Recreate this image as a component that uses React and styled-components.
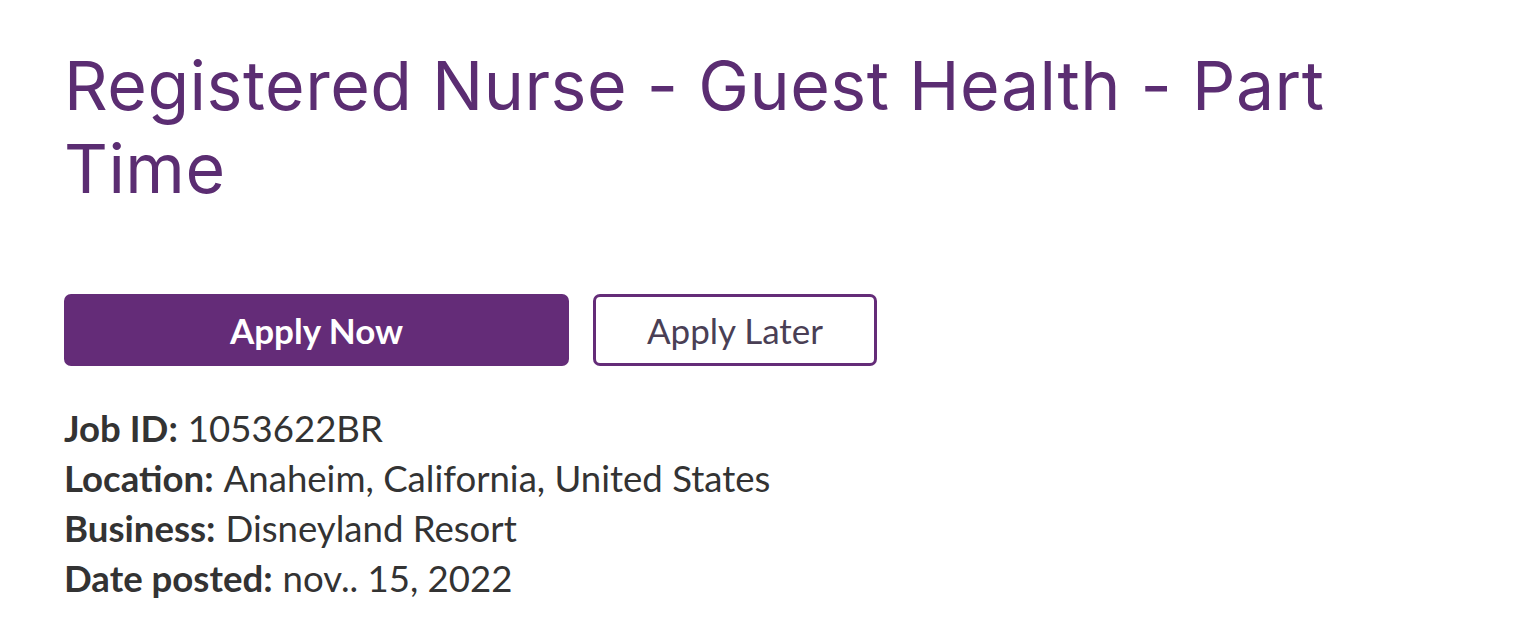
import React from 'react';
import styled, { createGlobalStyle } from 'styled-components';

const GlobalStyle = createGlobalStyle`
  body {
    margin: 0;
    background: #ffffff;
    font-family: "Lato", "Liberation Sans", sans-serif;
  }
`;

const Page = styled.div`
  padding: 44px 64px 0 64px;
`;

const Title = styled.h1`
  margin: 0;
  max-width: 1380px;
  font-family: "Inter", "Liberation Sans", sans-serif;
  font-weight: 400;
  font-size: 68px;
  line-height: 83px;
  color: #5b2d72;
  letter-spacing: 0.5px;
`;

const Actions = styled.div`
  display: flex;
  gap: 24px;
  margin-top: 84px;
`;

const Button = styled.button`
  height: 72px;
  width: ${props => props.$width}px;
  border-radius: 7px;
  border: 3px solid #642c78;
  background: ${props => (props.$primary ? '#642c78' : '#ffffff')};
  color: ${props => (props.$primary ? '#ffffff' : '#4a3f55')};
  font-family: "Lato", "Liberation Sans", sans-serif;
  font-weight: ${props => (props.$primary ? 700 : 400)};
  font-size: 35px;
  cursor: pointer;
`;

const Details = styled.dl`
  margin: 37px 0 0 0;
  font-size: 36.6px;
  line-height: 50px;
  color: #333333;
`;

const Row = styled.div`
  display: flex;
  gap: 10px;
`;

const Label = styled.dt`
  font-weight: 700;
`;

const Value = styled.dd`
  margin: 0;
`;

const details = [
  ['Job ID:', '1053622BR'],
  ['Location:', 'Anaheim, California, United States'],
  ['Business:', 'Disneyland Resort'],
  ['Date posted:', 'nov.. 15, 2022'],
];

export default function App() {
  return (
    <>
      <GlobalStyle />
      <Page>
        <Title>Registered Nurse - Guest Health - Part Time</Title>
        <Actions>
          <Button $primary $width={505}>Apply Now</Button>
          <Button $width={284}>Apply Later</Button>
        </Actions>
        <Details>
          {details.map(([label, value]) => (
            <Row key={label}>
              <Label>{label}</Label>
              <Value>{value}</Value>
            </Row>
          ))}
        </Details>
      </Page>
    </>
  );
}
